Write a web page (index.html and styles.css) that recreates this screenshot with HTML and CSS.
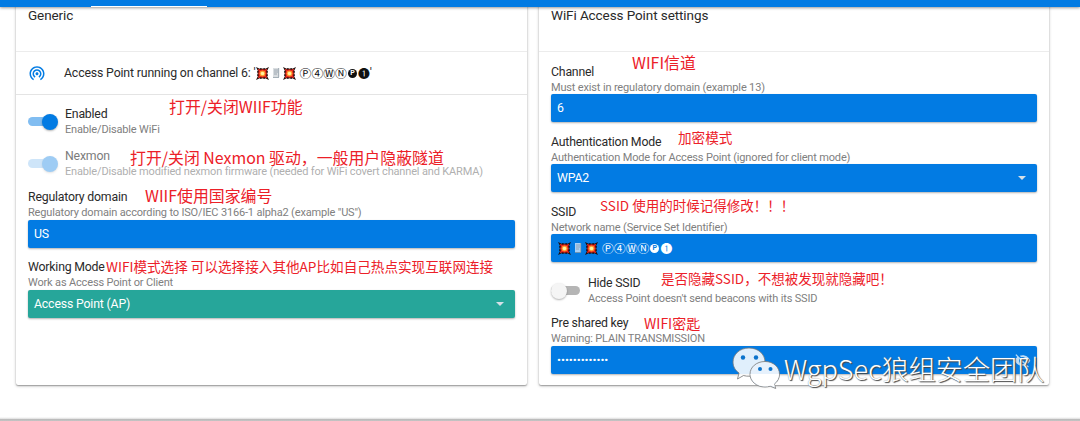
FILE: index.html
```html
<!DOCTYPE html>
<html lang="zh">
<head>
<meta charset="utf-8">
<title>WiFi settings</title>
<link rel="stylesheet" href="styles.css">
</head>
<body>
<svg class="defs" aria-hidden="true">
  <symbol id="boom" viewBox="0 0 14 14">
    <path fill="#1d0b0b" d="M0 0l4 2 1-1 2 1 2-1 1 1 4-2-2 4 1 1-1 2 1 2-1 1 2 4-4-2-1 1-2-1-2 1-1-1-4 2 2-4-1-1 1-2-1-2 1-1z"/>
    <path fill="#e8291c" d="M2 2l3 1 2-.7L9 3l3-1-1 3 .7 2-.7 2 1 3-3-1-2 .7L5 11l-3 1 1-3-.7-2L3 5z"/>
    <path fill="#ff9a2e" d="M4.500 4.500l2.500-.7 2.500.7.700 2.500-.7 2.500-2.500.7-2.500-.7-.7-2.500z"/>
    <circle cx="7" cy="7" r="1.900" fill="#fff3a0"/>
  </symbol>
  <symbol id="server" viewBox="0 0 8 12">
    <path fill="currentColor" d="M1 1h6v9H1z"/>
    <path stroke="#8d9aa5" stroke-width=".8" d="M2 3h4M2 5h4M2 7h3M1 10.5h6M6.7 1v9"/>
  </symbol>
</svg>
<header class="toolbar"><div class="tab-marker"></div></header>
<main class="page">
  <section class="card">
    <h2 class="card-title">Generic</h2>
    <div class="status">
      <svg class="tethering" viewBox="0 0 24 24"><path fill="#027be3" d="M12 11c-1.100 0-2 .9-2 2s.9 2 2 2 2-.9 2-2-.9-2-2-2zm6 2c0-3.310-2.690-6-6-6s-6 2.690-6 6c0 2.220 1.210 4.150 3 5.190l1-1.740c-1.190-.7-2-1.970-2-3.450 0-2.210 1.790-4 4-4s4 1.790 4 4c0 1.480-.81 2.750-2 3.450l1 1.740c1.790-1.040 3-2.970 3-5.190zM12 3C6.480 3 2 7.480 2 13c0 3.700 2.010 6.920 4.990 8.650l1-1.730C5.610 18.530 4 15.960 4 13c0-4.420 3.580-8 8-8s8 3.580 8 8c0 2.960-1.610 5.530-4 6.920l1 1.730c2.990-1.730 5-4.950 5-8.650 0-5.520-4.480-10-10-10z"/></svg>
      <span class="label">Access Point running on channel 6: '</span>
      <span class="ssid"><svg class="boom"><use href="#boom"/></svg><svg class="server"><use href="#server"/></svg><svg class="boom"><use href="#boom"/></svg><span class="circled">Ⓟ④ⓌⓃ<b class="solid">P</b>❶</span></span><span class="label">'</span>
    </div>
    <div class="form">
      <div class="toggle-row"><span class="toggle on"></span><div><div class="label">Enabled</div><div class="sub">Enable/Disable WiFi</div></div></div>
      <div class="toggle-row disabled"><span class="toggle on"></span><div><div class="label">Nexmon</div><div class="sub">Enable/Disable modified nexmon firmware (needed for WiFi covert channel and KARMA)</div></div></div>
      <div class="field"><div class="label">Regulatory domain</div><div class="sub">Regulatory domain according to ISO/IEC 3166-1 alpha2 (example "US")</div><div class="input">US</div></div>
      <div class="field"><div class="label">Working Mode</div><div class="sub">Work as Access Point or Client</div><div class="input teal">Access Point (AP)<i class="caret"></i></div></div>
    </div>
  </section>
  <section class="card">
    <h2 class="card-title">WiFi Access Point settings</h2>
    <div class="form right">
      <div class="field"><div class="label">Channel</div><div class="sub">Must exist in regulatory domain (example 13)</div><div class="input">6</div></div>
      <div class="field"><div class="label">Authentication Mode</div><div class="sub">Authentication Mode for Access Point (ignored for client mode)</div><div class="input">WPA2<i class="caret"></i></div></div>
      <div class="field"><div class="label">SSID</div><div class="sub">Network name (Service Set Identifier)</div><div class="input"><span class="ssid light"><svg class="boom"><use href="#boom"/></svg><svg class="server"><use href="#server"/></svg><svg class="boom"><use href="#boom"/></svg><span class="circled">Ⓟ④ⓌⓃ<b class="solid">P</b>❶</span></span></div></div>
      <div class="toggle-row"><span class="toggle"></span><div><div class="label">Hide SSID</div><div class="sub">Access Point doesn't send beacons with its SSID</div></div></div>
      <div class="field"><div class="label">Pre shared key</div><div class="sub">Warning: PLAIN TRANSMISSION</div><div class="input"><span class="dots">•••••••••••••</span>
        <svg class="eye" viewBox="0 0 24 24"><path fill="#fff" fill-opacity=".75" d="M12 7c2.760 0 5 2.240 5 5 0 .65-.13 1.260-.36 1.830l2.920 2.920c1.510-1.260 2.700-2.890 3.430-4.750-1.730-4.390-6-7.500-11-7.500-1.400 0-2.740.25-3.980.7l2.160 2.160C10.740 7.130 11.350 7 12 7zM2 4.270l2.280 2.280.46.46C3.080 8.300 1.780 10.020 1 12c1.730 4.390 6 7.500 11 7.500 1.550 0 3.030-.3 4.380-.84l.42.42L19.730 22 21 20.730 3.270 3 2 4.270zM7.530 9.800l1.550 1.550c-.05.21-.08.43-.08.65 0 1.660 1.340 3 3 3 .22 0 .44-.03.65-.08l1.550 1.550c-.67.33-1.410.53-2.200.53-2.760 0-5-2.240-5-5 0-.79.2-1.530.53-2.200z"/></svg></div></div>
    </div>
  </section>
</main>
<div class="bottom-edge"></div>
<div class="note n1">打开/关闭WIIF功能</div>
<div class="note n2">打开/关闭 Nexmon 驱动，一般用户隐蔽隧道</div>
<div class="note n3">WIIF使用国家编号</div>
<div class="note n4">WIFI模式选择 可以选择接入其他AP比如自己热点实现互联网连接</div>
<div class="note n5">WIFI信道</div>
<div class="note n6">加密模式</div>
<div class="note n7">SSID 使用的时候记得修改！！！</div>
<div class="note n8">是否隐藏SSID，不想被发现就隐藏吧！</div>
<div class="note n9">WIFI密匙</div>
<div class="watermark">
  <svg viewBox="0 0 48 42">
    <g stroke="#777" stroke-width=".8" fill="#fff" fill-opacity=".88">
      <path d="M17 1C8 1 1 7.200 1 15c0 4.500 2.200 8.300 6 11l-1.500 6 6-3.500c2 .6 4 .8 6.500.7C26 29 33 23 33 15S26 1 17 1z"/>
      <path fill-opacity="1" fill="#e6f1fc" d="M33 14.500c-8.500 0-15 5.600-15 12.700S24.500 40 33 40c1.900 0 3.600-.3 5.200-.8l5.500 2.300-1.300-4.500c3.400-2.400 5.100-5.900 5.100-9.800 0-7.100-6.100-12.700-14.500-12.700z"/>
    </g>
    <path fill="#fff" d="M18.500 27h28.500c-.2 4-2 7-5 9.200l.8 3.500-4.300-1.300C28.500 41.500 19 36 18.500 27z"/>
    <g fill="#0b73cc"><circle cx="11" cy="10.500" r="2.200"/><circle cx="24" cy="10.500" r="2.200"/><circle cx="28" cy="22" r="2"/><circle cx="38.500" cy="22" r="2"/></g>
  </svg>
  <span>WgpSec狼组安全团队</span>
</div>
</body>
</html>
```
FILE: styles.css
```css
* { box-sizing: border-box; }
body { margin: 0; height: 421px; overflow: hidden; position: relative; background: #fff; font-family: Roboto, "Noto Sans CJK SC", sans-serif; color: #2a2a2a; }
.defs { position: absolute; width: 0; height: 0; }
.toolbar { position: absolute; z-index: 2; top: 0; left: 0; right: 0; height: 7px; background: #027be3; box-shadow: 0 1px 3px rgba(0,0,0,.4); }
.tab-marker { width: 116px; height: 1.5px; margin: 5.5px 0 0 91px; background: #fff; }
.page { display: grid; grid-template-columns: 511px 510px; gap: 12px; padding-left: 16px; height: 385px; }
.card { border-radius: 0 0 2px 2px; box-shadow: 0 1px 3px rgba(0,0,0,.3), 0 1px 1px rgba(0,0,0,.2); }
.card-title { margin: 0; height: 52px; padding: 6px 12px 0; border-bottom: 1px solid #ececec; font-size: 13.5px; line-height: 18px; font-weight: 400; letter-spacing: -.09px; }
.status { display: flex; align-items: center; height: 43px; padding-left: 12px; border-bottom: 1px solid #e4e4e4; }
.tethering { width: 18px; height: 18px; margin-right: 18px; }
.label { font-size: 12.300px; line-height: 16px; letter-spacing: -.2px; white-space: nowrap; }
.status .label { letter-spacing: -.15px; }
.sub { font-size: 11px; line-height: 15px; letter-spacing: -.16px; color: #808080; white-space: nowrap; }
.form { padding: 5px 12px 0; }
.form.right { padding-top: 7px; }
.right .input { margin-top: -1px; }
.toggle-row { display: flex; align-items: center; gap: 7px; height: 42px; }
.right .toggle-row { height: 42px; }
.right .toggle-row + .field { padding-top: 4px; }
.right .toggle-row + .field .input { margin-top: 0; }
.toggle { position: relative; width: 30px; height: 17px; flex: none; }
.toggle::before { content: ""; position: absolute; left: 0; right: 1px; top: 4px; height: 9px; border-radius: 5px; background: #b5b5b5; }
.toggle::after { content: ""; position: absolute; left: 0; top: 1px; width: 16px; height: 16px; border-radius: 50%; background: #f5f5f5; box-shadow: 0 1px 2px rgba(0,0,0,.3); }
.toggle.on::before { background: #81bdf1; }
.toggle.on::after { left: 14px; background: #027be3; }
.disabled .toggle { opacity: .38; }
.disabled .label, .disabled .sub { opacity: .62; }
.field { height: 70px; padding-top: 5px; }
.input { display: flex; align-items: center; position: relative; height: 28px; padding: 0 6px; border-radius: 2px; background: #027be3; color: #fff; font-size: 12.300px; letter-spacing: -.17px; box-shadow: 0 1px 2px rgba(0,0,0,.3); }
.input.teal { background: #26a69a; }
.caret { margin-left: auto; margin-right: 5px; border: 4px solid transparent; border-top-color: #d5e0e8; border-bottom: 0; }
.eye { width: 17px; height: 17px; margin-left: auto; }
.dots { font-size: 11.700px; letter-spacing: 0; }
.ssid { display: inline-flex; align-items: center; color: #111; letter-spacing: 0; }
.boom { width: 13px; height: 13px; }
.server { width: 8px; height: 12px; margin: 0 3px; color: #d9dde0; }
.light { color: #fff; }
.light .boom:first-child { margin-left: 1px; }
.light .server { color: #a7d0f7; }
.circled { display: inline-flex; align-items: center; margin-left: 4px; font: 11.850px/16px "Noto Sans CJK JP", sans-serif; }
.solid { width: 9px; height: 9px; margin: 0 1px; border-radius: 50%; background: #111; color: #fff; font: 700 7px/9px Roboto, sans-serif; text-align: center; }
.light .solid { background: #fff; color: #027be3; }
.bottom-edge { position: absolute; left: 0; right: 0; bottom: 0; height: 4px; background: linear-gradient(#fff, #ddd 50%, #b9b9b9 50%, #c4c4c4); }
.note { position: absolute; color: #ec2028; white-space: nowrap; font-family: "Noto Sans CJK SC", sans-serif; font-size: 15.900px; line-height: 20px; }
.n1 { left: 169px; top: 97px; }
.n2 { left: 130px; top: 148px; }
.n3 { left: 145px; top: 186px; }
.n4 { left: 106px; top: 256px; font-size: 13.600px; }
.n5 { left: 632px; top: 53px; }
.n6 { left: 678px; top: 127px; font-size: 13.600px; }
.n7 { left: 600px; top: 195px; font-size: 13.500px; }
.n8 { left: 661px; top: 268px; font-size: 13.500px; }
.n9 { left: 644px; top: 313px; font-size: 14px; }
.watermark { position: absolute; left: 732px; top: 347px; display: flex; }
.watermark svg { width: 48px; height: 42px; }
.watermark span { margin-left: 4px; color: #fff; white-space: nowrap; font: 300 27.100px/44px "Noto Sans CJK SC", sans-serif; text-shadow: 1px 1px 1px #444, 0 0 1px #888; }
```
